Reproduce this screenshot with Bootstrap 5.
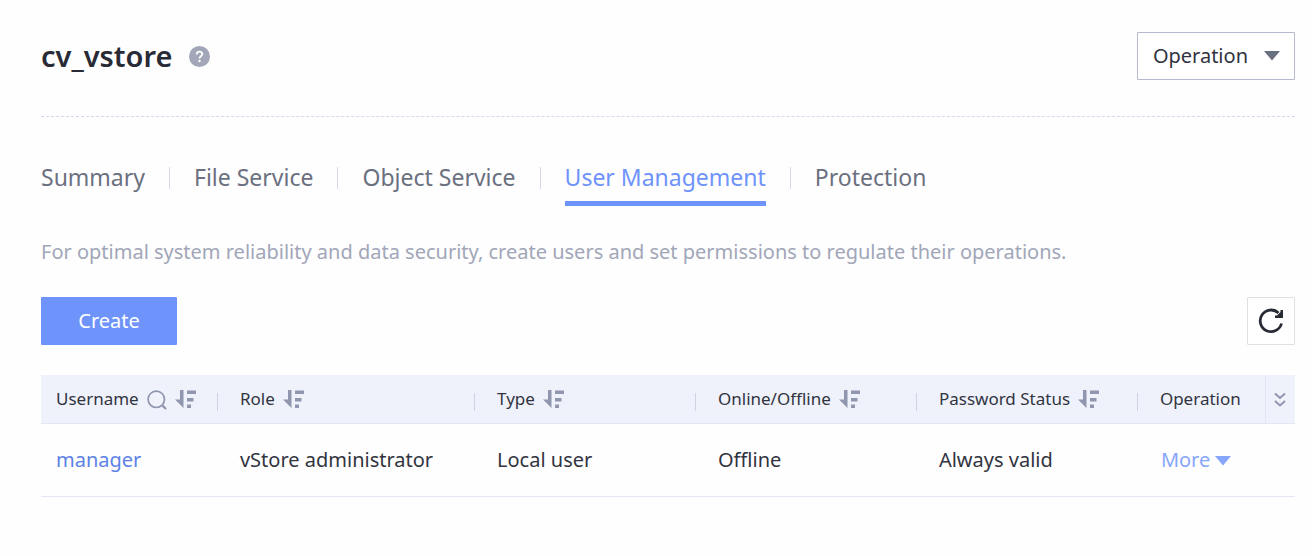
<!DOCTYPE html>
<html lang="en">
<head>
<meta charset="utf-8">
<meta name="viewport" content="width=device-width, initial-scale=1">
<title>cv_vstore</title>
<link href="https://cdn.jsdelivr.net/npm/bootstrap@5.3.0/dist/css/bootstrap.min.css" rel="stylesheet">
<style>
  body { font-family: "Noto Sans", "Open Sans", sans-serif; font-size: 20px; line-height: 28px; color: #31343f; background: #fefefe; }
  .page { padding: 32px 17px 32px 41px; }
  .page-head { padding-bottom: 36px; border-bottom: 1px dashed #d5d9ea; }
  .page-title { font-size: 29px; line-height: 40px; font-weight: 600; color: #282b36; }
  .help { width: 21px; height: 21px; }
  .operation { height: 48px; padding: 0 14px 0 15px; border: 1px solid #b4b9d1; border-radius: 1px; font-size: 20px; color: #31343f; background: #fff; }
  .operation svg { color: #6b7080; }
  .tabs { margin-top: 41px; font-size: 23px; line-height: 38px; }
  .tabs, .tabs li { gap: 24px; }
  .tabs a { color: #6b7080; text-decoration: none; padding-bottom: 5px; border-bottom: 5px solid transparent; }
  .tabs a.active { color: #6e93fa; border-color: #6e93fa; }
  .tabs li + li::before { content: ""; width: 1px; height: 22px; margin-top: 9px; background: #d5d9e8; }
  .hint { margin: 32px 0 31px; color: #a1a6b8; }
  .create { width: 136px; height: 48px; border: 0; border-radius: 1px; font-size: 20px; color: #fff; background: #6e93fa; }
  .refresh { width: 48px; height: 48px; border: 1px solid #dfe0e4; border-radius: 1px; background: #fff; }
  .users { table-layout: fixed; margin: 30px 0 0; color: #31343f; }
  .users > :not(caption) > * > * { padding: 0 0 0 15px; border-bottom: 1px solid #e4e6f1; background: none; color: inherit; }
  .users > thead > tr > th { height: 48px; font-size: 17px; font-weight: 400; vertical-align: middle; background: #eff2fb; }
  .users thead .iconbtn { padding-top: 2px; }
  .users tbody td { height: 73px; }
  .sep { width: 1px; height: 18px; margin: 6px 7px 0 auto; background: #cfd4e3; }
  .users > thead > tr > .expand { padding: 0; text-align: center; border-left: 1px solid #e4e6f1; }
  .iconbtn { padding: 0; border: 0; background: none; color: #8f96ad; line-height: 0; }
  .iconbtn svg, .operation svg, .more svg { fill: currentColor; }
  .user-link { color: #5c82e6; text-decoration: none; }
  .more { padding: 0 0 0 1px; border: 0; background: none; color: #87a6fb; }
  .more svg { margin: 3px 0 0 1px; }
</style>
</head>
<body>
<svg class="d-none">
  <symbol id="sort" viewBox="0 0 21 19"><path d="M5 0h3.500v18L0 9.500h5zM12 .500h9v3.500h-9zM12 8h6.500v3.500H12zM12 14.500h4V18h-4z"/></symbol>
  <symbol id="down" viewBox="0 0 16 10"><path d="M0 0h16L8 9.500z"/></symbol>
</svg>
<main class="page">
  <header class="page-head d-flex justify-content-between align-items-center">
    <div class="d-flex align-items-center">
      <h1 class="page-title m-0">cv_vstore</h1>
      <button class="iconbtn ms-3" type="button" aria-label="Help">
        <svg class="help" viewBox="0 0 21 21"><circle cx="10.500" cy="10.500" r="10.500" fill="#a1a6b8"/><path d="M7.700 8.600C7.700 4.700 13.300 4.900 13.300 8c0 2-2.800 2.300-2.800 4.600" fill="none" stroke="#fff" stroke-width="1.900"/><circle cx="10.500" cy="15" r="1.200" fill="#fff"/></svg>
      </button>
    </div>
    <button class="operation d-flex align-items-center gap-3" type="button">Operation
      <svg width="16" height="10"><use href="#down"/></svg>
    </button>
  </header>

  <nav aria-label="Sections">
    <ul class="tabs list-unstyled d-flex mb-0">
      <li class="d-flex"><a href="#">Summary</a></li>
      <li class="d-flex"><a href="#">File Service</a></li>
      <li class="d-flex"><a href="#">Object Service</a></li>
      <li class="d-flex"><a class="active" aria-current="page" href="#">User Management</a></li>
      <li class="d-flex"><a href="#">Protection</a></li>
    </ul>
  </nav>

  <p class="hint">For optimal system reliability and data security, create users and set permissions to regulate their operations.</p>

  <div class="d-flex justify-content-between">
    <button class="create" type="button">Create</button>
    <button class="refresh d-flex align-items-center justify-content-center p-0" type="button" aria-label="Refresh">
      <svg width="26" height="26" viewBox="0 0 26 26"><path d="M23.500 15.500A10.800 10.800 0 1 1 20.500 5" fill="none" stroke="#282b36" stroke-width="2.800"/><path d="M25 2v8h-8V7.500h2L22.500 4V2z" fill="#282b36"/></svg>
    </button>
  </div>

  <table class="users table align-middle">
    <colgroup><col style="width:14.670%"><col style="width:20.500%"><col style="width:17.620%"><col style="width:17.620%"><col style="width:17.620%"><col><col style="width:30px"></colgroup>
    <thead>
      <tr>
        <th scope="col"><div class="d-flex align-items-center">Username
          <button class="iconbtn ms-2" type="button" aria-label="Search"><svg width="20" height="20" viewBox="0 0 20 20"><path d="M15.600 15.600 19 19" stroke="currentColor" stroke-width="2.200"/><circle cx="9.300" cy="9.300" r="8.200" fill="none" stroke="currentColor" stroke-width="1.700"/></svg></button>
          <button class="iconbtn ms-2" type="button" aria-label="Sort"><svg width="21" height="19"><use href="#sort"/></svg></button><span class="sep"></span></div></th>
        <th scope="col"><div class="d-flex align-items-center">Role <button class="iconbtn ms-2" type="button" aria-label="Sort"><svg width="21" height="19"><use href="#sort"/></svg></button><span class="sep"></span></div></th>
        <th scope="col"><div class="d-flex align-items-center">Type <button class="iconbtn ms-2" type="button" aria-label="Sort"><svg width="21" height="19"><use href="#sort"/></svg></button><span class="sep"></span></div></th>
        <th scope="col"><div class="d-flex align-items-center">Online/Offline <button class="iconbtn ms-2" type="button" aria-label="Sort"><svg width="21" height="19"><use href="#sort"/></svg></button><span class="sep"></span></div></th>
        <th scope="col"><div class="d-flex align-items-center">Password Status <button class="iconbtn ms-2" type="button" aria-label="Sort"><svg width="21" height="19"><use href="#sort"/></svg></button><span class="sep"></span></div></th>
        <th scope="col">Operation</th>
        <th class="expand" scope="col"><button class="iconbtn" type="button" aria-label="Columns"><svg width="12" height="16" viewBox="0 0 12 16"><path d="m1 1.500 5 4.500 5-4.500M1 9l5 4.500L11 9" fill="none" stroke="currentColor" stroke-width="2"/></svg></button></th>
      </tr>
    </thead>
    <tbody>
      <tr>
        <td><a class="user-link" href="#">manager</a></td>
        <td>vStore administrator</td>
        <td>Local user</td>
        <td>Offline</td>
        <td>Always valid</td>
        <td><button class="more d-flex align-items-center gap-1" type="button">More <svg width="16" height="10"><use href="#down"/></svg></button></td>
        <td></td>
      </tr>
    </tbody>
  </table>
</main>
<script src="https://cdn.jsdelivr.net/npm/bootstrap@5.3.0/dist/js/bootstrap.bundle.min.js"></script>
</body>
</html>
